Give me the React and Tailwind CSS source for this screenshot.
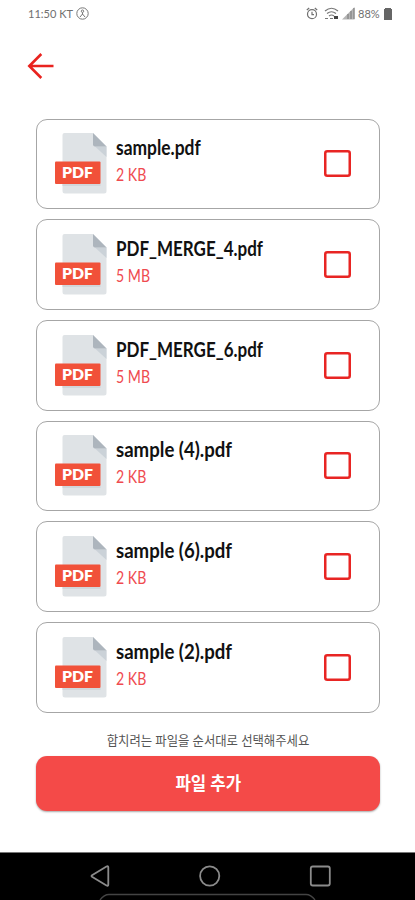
import React, { useState } from 'react';

const FILES = [
  { name: 'sample.pdf', size: '2 KB', nameFit: 'scale-x-[0.87]' },
  { name: 'PDF_MERGE_4.pdf', size: '5 MB', nameFit: 'scale-x-[0.85]' },
  { name: 'PDF_MERGE_6.pdf', size: '5 MB', nameFit: 'scale-x-[0.85]' },
  { name: 'sample (4).pdf', size: '2 KB', nameFit: 'scale-x-[0.93]' },
  { name: 'sample (6).pdf', size: '2 KB', nameFit: 'scale-x-[0.93]' },
  { name: 'sample (2).pdf', size: '2 KB', nameFit: 'scale-x-[0.93]' },
];

// --- Status bar ---
const StatusBar = () => (
  <div className="flex h-[27px] shrink-0 items-center justify-between pl-[28px] pr-[22px] text-[12px] leading-none text-[#707070]">
    <div className="flex items-center gap-[3px]">
      <span className="w-[45px] whitespace-nowrap"><span className="inline-block origin-left scale-x-[0.92]">11:50 KT</span></span>
      <svg width="13" height="13" viewBox="0 0 13 13" fill="none" stroke="#777" strokeWidth="1">
        <circle cx="6.5" cy="6.5" r="5.7" />
        <circle cx="6.5" cy="4.2" r="1.2" />
        <path d="M6.5 5.5v2M4 10l2.5-3L9 10" />
      </svg>
    </div>
    <div className="flex items-center">
      <svg width="12" height="13" viewBox="0 0 12 13" fill="none" stroke="#707070" strokeWidth="1.2">
        <circle cx="6" cy="7.2" r="4.5" />
        <path d="M6 4.7v3h2M.8 3l2.4-2M11.2 3L8.8 1" />
      </svg>
      <svg className="ml-[6px]" width="15" height="13" viewBox="0 0 15 13" fill="none" stroke="#777" strokeWidth="1.2">
        <path d="M1 4q6.500-5.500 13 0M3 6.500q4.500-3.500 9 0M5 9q2.500-2 5 0M1 11.500h3M6 11.500h3" />
        <path d="M10 9h4v3h-4z" fill="#444" stroke="none" />
      </svg>
      <svg className="ml-[3px]" width="13" height="13" viewBox="0 0 13 13">
        <path d="M0 12.500L12.500 0v12.500z" fill="#b5b5b5" />
        <path d="M6 7v5M9 4v8M12 1v11" stroke="#777" />
      </svg>
      <span className="ml-[3px] w-[22px] whitespace-nowrap"><span className="inline-block origin-left scale-x-[0.92]">88%</span></span>
      <svg className="ml-[4px] mr-px" width="8" height="12" viewBox="0 0 8 12" fill="#666">
        <path d="M1 0h6v1h1v11H0V1h1z" />
      </svg>
    </div>
  </div>
);

const PdfIcon = () => (
  <svg className="shrink-0" width="52" height="61" viewBox="0 0 52 61">
    <path d="M9.500 0H38L51.500 13.500V58a2.500 2.500 0 0 1-2.500 2.500H10A2.500 2.500 0 0 1 7.500 58V2a2 2 0 0 1 2-2z" fill="#dfe3e6" />
    <path d="M40 13.500h11.500V24z" fill="#cbd2d8" />
    <path d="M38 0l13.500 13.500H40a2 2 0 0 1-2-2z" fill="#adb5bd" />
    <path d="M7.500 51h38v2h-38z" fill="#d1d6da" />
    <rect y="28.500" width="45.500" height="22.500" rx="1" fill="#f15139" />
    <text x="22.500" y="45" textAnchor="middle" textLength="31" lengthAdjust="spacingAndGlyphs" fontSize="15" fontWeight="800" fill="#fff">PDF</text>
  </svg>
);

const FileCard = ({ file, checked, onToggle }) => (
  <div className="flex h-[90.700px] shrink-0 rounded-[11px] border border-[#a6a6a6] bg-white pl-[17.500px] pr-[28px] pt-[13.500px]">
    <PdfIcon />
    <div className="ml-[9.500px] flex flex-1 flex-col items-start">
      <span className={`mt-[1px] origin-left whitespace-nowrap text-[20px] font-bold leading-[26px] text-[#111] ${file.nameFit}`}>
        {file.name}
      </span>
      <span className="mt-[3px] origin-left scale-x-[0.83] text-[17px] leading-[24px] text-[#ef4a4f]">{file.size}</span>
    </div>
    <button
      type="button"
      role="checkbox"
      aria-checked={checked}
      aria-label={file.name}
      onClick={onToggle}
      className="mt-[17px] size-[27px]"
    >
      <svg width="27" height="27" viewBox="0 0 27 27" fill={checked ? '#e82523' : 'none'} stroke="#e82523" strokeWidth="2.500">
        <rect x="1.250" y="1.250" width="24.500" height="24.500" rx="2" />
      </svg>
    </button>
  </div>
);

const NavBar = () => (
  <div className="h-[48px] shrink-0 border-t border-[#777] bg-black">
    <svg width="415" height="47" viewBox="0 0 415 47" fill="none" stroke="#8b8b8b" strokeWidth="1.800" strokeLinejoin="round">
      <path d="M92 22.200Q91 23 92 23.800L106.500 32.500Q108.300 33.300 108.300 31.500V14.500Q108.300 12.700 106.500 13.500Z" />
      <circle cx="209.700" cy="23" r="9.600" />
      <rect x="310.800" y="13.500" width="19" height="19" rx="2" />
      <path d="M100 47q4-5.500 9-5.500h197q5 0 9 5.500" stroke="#444" strokeWidth="1.300" />
    </svg>
  </div>
);

const App = () => {
  const [selected, setSelected] = useState([]);

  const toggleFile = (name) => {
    setSelected((prev) => (prev.includes(name) ? prev.filter((n) => n !== name) : [...prev, name]));
  };

  return (
    <div className="flex h-[900px] w-[415px] flex-col overflow-hidden bg-white font-['Lato','Noto_Sans_CJK_KR',sans-serif]">
      <StatusBar />

      <header className="h-[91.700px] shrink-0 pl-[27px] pt-[25px]">
        <button type="button" aria-label="뒤로" className="block">
          <svg width="28" height="28" viewBox="0 0 28 28" fill="none" stroke="#e9231f" strokeWidth="2.600">
            <path d="M26.500 14H3M14.300 2L2.300 14l12 12" />
          </svg>
        </button>
      </header>

      <main className="flex flex-col gap-[10px] pl-[36px] pr-[35px]">
        {FILES.map((file) => (
          <FileCard
            key={file.name}
            file={file}
            checked={selected.includes(file.name)}
            onToggle={() => toggleFile(file.name)}
          />
        ))}
      </main>

      <footer className="flex flex-1 flex-col pl-[36px] pr-[35px] pt-[18px]">
        <p className="h-[25px] scale-x-[0.95] whitespace-nowrap text-center text-[13px] leading-[18px] text-[#555]">
          합치려는 파일을 순서대로 선택해주세요
        </p>
        <button
          type="button"
          className="h-[55px] shrink-0 rounded-[11px] bg-[#f44a48] text-[18px] font-bold text-white shadow-[0_1px_2px_rgba(0,0,0,0.35)]"
        >
          <span className="inline-block scale-x-[0.93]">파일 추가</span>
        </button>
      </footer>

      <NavBar />
    </div>
  );
};

export default App;
